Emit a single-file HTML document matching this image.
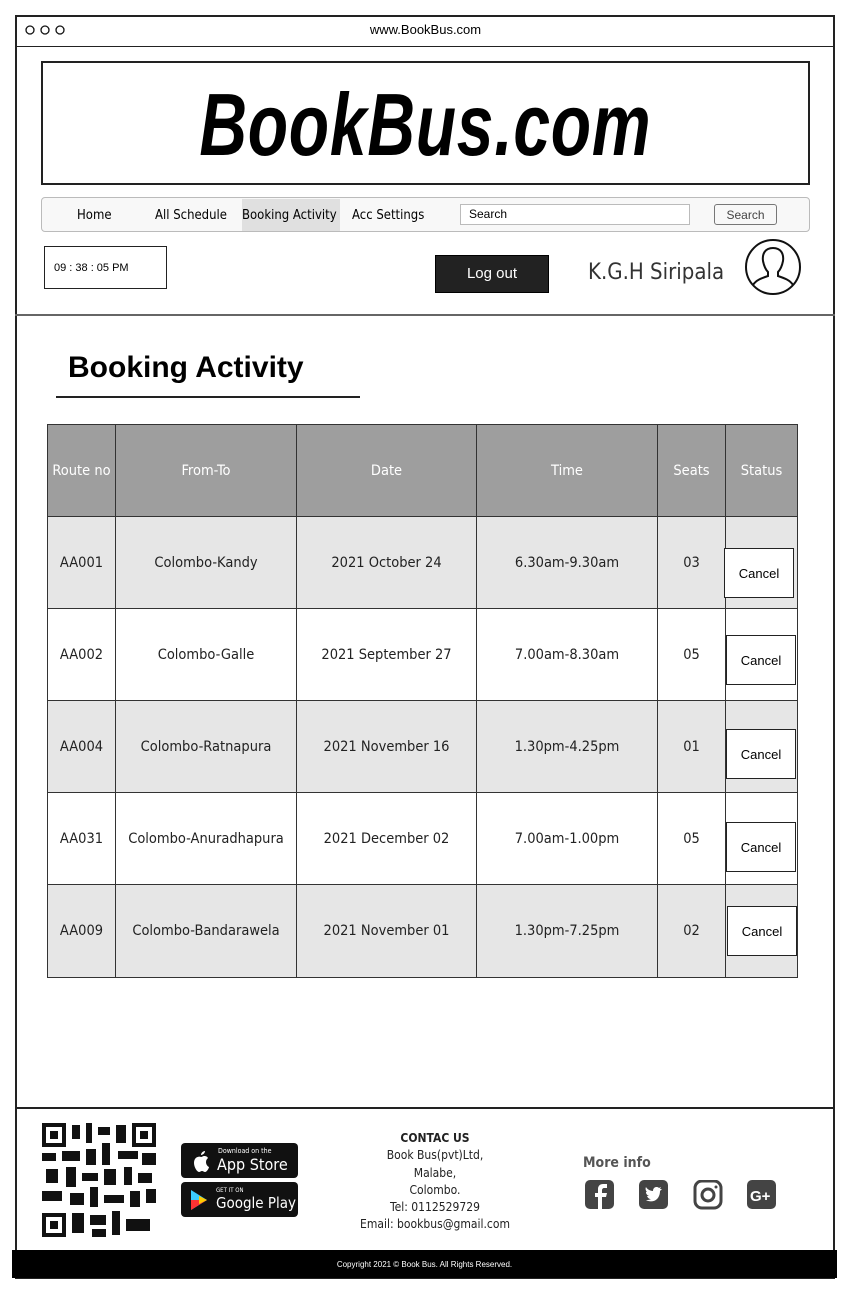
<!DOCTYPE html>
<html><head><meta charset="utf-8"><style>
*{box-sizing:border-box;margin:0;padding:0}
body{width:851px;height:1291px;background:#fff;position:relative;font-family:"Liberation Sans",sans-serif;overflow:hidden}
.a{position:absolute}
.t{font-family:"DejaVu Sans Condensed","Liberation Sans",sans-serif}
td{border:1px solid #333;text-align:center;font-size:14.5px;color:#222;font-family:"DejaVu Sans Condensed","Liberation Sans",sans-serif;white-space:nowrap}
.cb{position:absolute;background:#fff;border:1px solid #222;font-size:13px;display:flex;align-items:center;justify-content:center;width:70px;height:50px}
</style></head><body>
<div class="a" style="left:15px;top:15px;width:820px;height:1264px;border:2px solid #222"></div>
<div class="a" style="left:15px;top:46px;width:820px;border-top:1.5px solid #222"></div>
<svg class="a" style="left:24px;top:24px" width="50" height="12"><g fill="none" stroke="#111" stroke-width="1.3"><circle cx="6" cy="6" r="4"/><circle cx="21" cy="6" r="4"/><circle cx="36" cy="6" r="4"/></g></svg>
<div class="a" style="left:0;width:851px;top:22px;text-align:center;font-size:13px">www.BookBus.com</div>
<div class="a" style="left:41px;top:61px;width:769px;height:124px;border:2px solid #222"></div>
<div class="a" style="left:0;width:851px;top:74px;text-align:center"><span style="display:inline-block;font-size:88px;font-weight:bold;font-style:italic;transform:scaleX(0.75);font-family:'Liberation Sans',sans-serif;letter-spacing:1px">BookBus.com</span></div>
<div class="a" style="left:41px;top:197px;width:769px;height:35px;border:1px solid #bbb;border-radius:4px;background:#f8f8f8"></div>
<div class="a" style="left:242px;top:199px;width:98px;height:32px;background:#e0e0e0"></div>
<div class="a t" style="left:77px;top:208px;font-size:13px">Home</div>
<div class="a t" style="left:155px;top:208px;font-size:13px">All Schedule</div>
<div class="a t" style="left:242px;top:208px;font-size:13px">Booking Activity</div>
<div class="a t" style="left:352px;top:208px;font-size:13px">Acc Settings</div>
<div class="a" style="left:460px;top:204px;width:230px;height:21px;border:1px solid #bbb;background:#fff;font-size:12px;padding:2px 8px">Search</div>
<div class="a" style="left:714px;top:204px;width:63px;height:21px;border:1px solid #777;border-radius:3px;font-size:12px;text-align:center;padding-top:3px;color:#444">Search</div>
<div class="a" style="left:44px;top:246px;width:123px;height:43px;border:1.5px solid #222;font-size:11px;padding:15px 9px">09 : 38 : 05 PM</div>
<div class="a" style="left:435px;top:255px;width:114px;height:38px;background:#222;border:1px solid #000;color:#fff;font-size:15px;text-align:center;padding-top:9px">Log out</div>
<div class="a t" style="left:588px;top:260px;font-size:22px;color:#333">K.G.H Siripala</div>
<svg class="a" style="left:744px;top:238px" width="58" height="58"><circle cx="29" cy="29" r="27" fill="none" stroke="#111" stroke-width="2"/><path d="M29 10c-8 0-11 6-10 13 1 5 3 9 5 11v4c-6 2-12 4-15 9M29 10c8 0 11 6 10 13-1 5-3 9-5 11v4c6 2 12 4 15 9" fill="none" stroke="#111" stroke-width="2"/></svg>
<div class="a" style="left:15px;top:314px;width:820px;border-top:2px solid #666"></div>
<div class="a" style="left:68px;top:351px;font-size:30px;font-weight:bold">Booking Activity</div>
<div class="a" style="left:56px;top:396px;width:304px;border-top:2px solid #222"></div>
<table class="a" style="left:47px;top:424px;width:750px;border-collapse:collapse;table-layout:fixed">
<colgroup><col style="width:68px"><col style="width:181px"><col style="width:180px"><col style="width:181px"><col style="width:68px"><col style="width:72px"></colgroup>
<tr style="height:92px;background:#9e9e9e"><td style="color:#fff">Route no</td><td style="color:#fff">From-To</td><td style="color:#fff">Date</td><td style="color:#fff">Time</td><td style="color:#fff">Seats</td><td style="color:#fff">Status</td></tr>
<tr style="height:92px;background:#e6e6e6"><td>AA001</td><td>Colombo-Kandy</td><td>2021 October 24</td><td>6.30am-9.30am</td><td>03</td><td></td></tr>
<tr style="height:92px"><td>AA002</td><td>Colombo-Galle</td><td>2021 September 27</td><td>7.00am-8.30am</td><td>05</td><td></td></tr>
<tr style="height:92px;background:#e6e6e6"><td>AA004</td><td>Colombo-Ratnapura</td><td>2021 November 16</td><td>1.30pm-4.25pm</td><td>01</td><td></td></tr>
<tr style="height:92px"><td>AA031</td><td>Colombo-Anuradhapura</td><td>2021 December 02</td><td>7.00am-1.00pm</td><td>05</td><td></td></tr>
<tr style="height:93px;background:#e6e6e6"><td>AA009</td><td>Colombo-Bandarawela</td><td>2021 November 01</td><td>1.30pm-7.25pm</td><td>02</td><td></td></tr>
</table>
<div class="cb" style="left:724px;top:548px">Cancel</div>
<div class="cb" style="left:726px;top:635px">Cancel</div>
<div class="cb" style="left:726px;top:729px">Cancel</div>
<div class="cb" style="left:726px;top:822px">Cancel</div>
<div class="cb" style="left:727px;top:906px">Cancel</div>
<div class="a" style="left:15px;top:1107px;width:820px;border-top:2px solid #222"></div>
<svg class="a" style="left:42px;top:1123px" width="114" height="114">
<rect x="0" y="0" width="114" height="114" fill="#fff"/>
<g fill="#111"><rect x="0" y="0" width="24" height="24"/><rect x="90" y="0" width="24" height="24"/><rect x="0" y="90" width="24" height="24"/></g>
<g fill="#fff"><rect x="4" y="4" width="16" height="16"/><rect x="94" y="4" width="16" height="16"/><rect x="4" y="94" width="16" height="16"/></g>
<g fill="#111"><rect x="8" y="8" width="8" height="8"/><rect x="98" y="8" width="8" height="8"/><rect x="8" y="98" width="8" height="8"/>
<rect x="30" y="2" width="8" height="14"/><rect x="44" y="0" width="6" height="20"/><rect x="56" y="4" width="12" height="8"/><rect x="74" y="2" width="10" height="18"/>
<rect x="0" y="30" width="14" height="8"/><rect x="20" y="28" width="18" height="10"/><rect x="44" y="26" width="10" height="16"/><rect x="60" y="20" width="8" height="22"/><rect x="76" y="28" width="20" height="8"/><rect x="100" y="30" width="14" height="12"/>
<rect x="4" y="46" width="12" height="14"/><rect x="24" y="44" width="10" height="20"/><rect x="40" y="50" width="16" height="8"/><rect x="62" y="46" width="12" height="16"/><rect x="82" y="44" width="8" height="18"/><rect x="96" y="50" width="14" height="10"/>
<rect x="0" y="68" width="20" height="10"/><rect x="28" y="70" width="14" height="12"/><rect x="48" y="64" width="8" height="20"/><rect x="62" y="72" width="20" height="8"/><rect x="88" y="68" width="10" height="16"/><rect x="104" y="66" width="10" height="14"/>
<rect x="30" y="90" width="12" height="20"/><rect x="48" y="92" width="16" height="10"/><rect x="70" y="88" width="8" height="24"/><rect x="84" y="96" width="24" height="12"/><rect x="50" y="106" width="14" height="8"/></g></svg>
<div class="a" style="left:181px;top:1143px;width:117px;height:35px;background:#111;border-radius:4px;color:#fff">
<svg class="a" style="left:10px;top:6px" width="20" height="24"><path d="M14 2c-2 0-4 2-4 4 2 0 4-2 4-4zM10 8c-2-1-7 0-7 6 0 4 3 9 5 9 1 0 2-1 3-1s2 1 3 1c2 0 4-4 4-5-2-1-3-3-3-5s1-3 2-4c-1-2-3-2-4-2s-2 1-3 1z" fill="#fff"/></svg>
<div class="a t" style="left:37px;top:4px;font-size:7px">Download on the</div>
<div class="a t" style="left:36px;top:12px;font-size:16px">App Store</div></div>
<div class="a" style="left:181px;top:1182px;width:117px;height:35px;background:#111;border-radius:4px;color:#fff">
<svg class="a" style="left:8px;top:7px" width="20" height="22"><path d="M2 1l16 10-16 10z" fill="#3bccff"/><path d="M2 11l16 0-16 10z" fill="#f33"/><path d="M10 7l8 4-8 4z" fill="#fc0"/></svg>
<div class="a t" style="left:35px;top:5px;font-size:6px">GET IT ON</div>
<div class="a t" style="left:35px;top:12px;font-size:15px">Google Play</div></div>
<div class="a t" style="left:340px;width:190px;top:1130px;text-align:center;font-size:12px;line-height:17.3px;color:#222"><b>CONTAC US</b><br>Book Bus(pvt)Ltd,<br>Malabe,<br>Colombo.<br>Tel: 0112529729<br>Email: bookbus@gmail.com</div>
<div class="a t" style="left:583px;top:1155px;font-size:14px;font-weight:bold;color:#555">More info</div>
<svg class="a" style="left:585px;top:1180px" width="192" height="30">
<rect x="0" y="0" width="29" height="29" rx="5" fill="#444"/><path d="M17 29V17h4l1-4h-5v-3c0-1 1-2 2-2h3V4h-4c-3 0-5 2-5 5v4h-3v4h3v12z" fill="#fff"/>
<rect x="54" y="0" width="29" height="29" rx="5" fill="#444"/><path d="M61 20c3 2 8 2 11-1 2-2 3-5 3-8l2-2-2 0 1-2-2 1c-2-2-6-1-6 3-3 0-6-2-7-4-1 2 0 4 1 5h-1c0 2 1 3 3 4h-2c1 2 2 3 4 3-2 1-3 1-5 1z" fill="#fff"/>
<rect x="110" y="1" width="26" height="27" rx="7" fill="none" stroke="#444" stroke-width="3"/><circle cx="123" cy="15" r="6" fill="none" stroke="#444" stroke-width="3"/><circle cx="131" cy="7" r="1.5" fill="#444"/>
<rect x="162" y="0" width="29" height="29" rx="5" fill="#444"/><text x="165" y="21" fill="#fff" font-size="15" font-weight="bold" font-family="Liberation Sans">G+</text></svg>
<div class="a" style="left:12px;top:1250px;width:825px;height:28px;background:#000;color:#fff;font-size:8px;text-align:center;padding-top:10px">Copyright 2021 © Book Bus. All Rights Reserved.</div>
</body></html>
